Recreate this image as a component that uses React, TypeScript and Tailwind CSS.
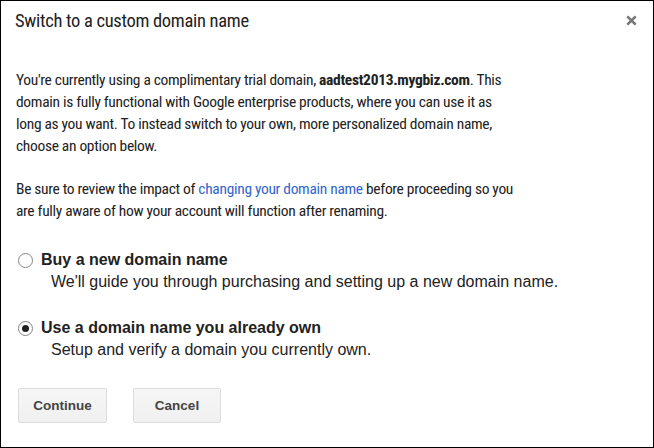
import React, { useState } from 'react';

const options = [
  {
    id: 'buy',
    label: 'Buy a new domain name',
    desc: "We'll guide you through purchasing and setting up a new domain name.",
  },
  {
    id: 'own',
    label: 'Use a domain name you already own',
    desc: 'Setup and verify a domain you currently own.',
  },
];

const Radio: React.FC<{ checked: boolean }> = ({ checked }) => (
  <span className="flex h-[15px] w-[15px] shrink-0 items-center justify-center rounded-full border border-[#858585] bg-white">
    {checked && <span className="h-[7px] w-[7px] rounded-full bg-[#222]" />}
  </span>
);

export default function App() {
  const [choice, setChoice] = useState('own');

  return (
    <div className="box-border h-[448px] w-[654px] border border-black bg-white font-['Roboto_Condensed','Liberation_Sans',sans-serif] text-[#222]">
      {/* Header */}
      <div className="flex items-start justify-between pl-[14px] pr-[16px] pt-[7px]">
        <h1 className="text-[18.5px] leading-[26px] font-normal tracking-[-0.3px]">Switch to a custom domain name</h1>
        <button className="mt-[7px] text-[#777] hover:text-[#333]" aria-label="Close">
          <svg width="11" height="11" viewBox="0 0 11 11">
            <path d="M1.3 1.3 L9.7 9.7 M9.7 1.3 L1.3 9.7" stroke="currentColor" strokeWidth="2.6" />
          </svg>
        </button>
      </div>

      {/* Body */}
      <div className="px-[15px] pt-[35px] text-[15.5px] leading-[22px] tracking-[-0.32px]">
        <p>
          You're currently using a complimentary trial domain, <b>aadtest2013.mygbiz.com</b>. This
          <br />
          domain is fully functional with Google enterprise products, where you can use it as
          <br />
          long as you want. To instead switch to your own, more personalized domain name,
          <br />
          choose an option below.
        </p>
        <p className="mt-[21px]">
          Be sure to review the impact of{' '}
          <a href="#" className="text-[#3366cc]">changing your domain name</a> before proceeding so you
          <br />
          are fully aware of how your account will function after renaming.
        </p>

        {/* Options */}
        <div className="mt-[27px] flex flex-col gap-[24px] font-['Liberation_Sans',Arial,sans-serif] text-[16px] tracking-normal">
          {options.map((o) => (
            <label key={o.id} className="flex cursor-pointer flex-col" onClick={() => setChoice(o.id)}>
              <span className="flex items-center gap-[8px] pl-[2px]">
                <Radio checked={choice === o.id} />
                <span className="font-bold">{o.label}</span>
              </span>
              <span className="pl-[35px]">{o.desc}</span>
            </label>
          ))}
        </div>

        <div className="mt-[27px] flex gap-[26px] pl-[2px] font-['Liberation_Sans',Arial,sans-serif] tracking-normal">
          <button className="h-[35px] w-[89px] rounded-[2px] border border-[#dcdcdc] bg-gradient-to-b from-[#f6f6f6] to-[#f0f0f0] text-[13.5px] font-bold text-[#444]">
            Continue
          </button>
          <button className="h-[35px] w-[88px] rounded-[2px] border border-[#dcdcdc] bg-gradient-to-b from-[#f6f6f6] to-[#f0f0f0] text-[13.5px] font-bold text-[#444]">
            Cancel
          </button>
        </div>
      </div>
    </div>
  );
}
